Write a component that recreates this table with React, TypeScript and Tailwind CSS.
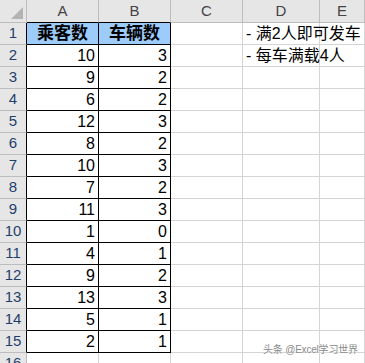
import React from 'react';

const rows: [number, number][] = [
  [10, 3], [9, 2], [6, 2], [12, 3], [8, 2], [10, 3], [7, 2],
  [11, 3], [1, 0], [4, 1], [9, 2], [13, 3], [5, 1], [2, 1],
];

const notes: Record<number, string> = {
  1: '- 满2人即可发车',
  2: '- 每车满载4人',
};

const font = { fontFamily: '"Liberation Sans", "Noto Sans CJK SC", sans-serif' };

const App: React.FC = () => {
  const grid = 'grid grid-cols-[27px_72px_72px_72px_77px_1fr]';
  const cell = 'h-[22px] border-r border-b border-[#d4d4d4] bg-white';

  return (
    <div className="relative w-[365px] h-[363px] overflow-hidden bg-white text-black" style={font}>
      {/* column headers */}
      <div className={grid}>
        <div className="relative h-[23px] bg-[#e6e6e6] border-r border-b border-[#bdbdbd]">
          <div className="absolute right-[3px] bottom-[3px] w-0 h-0 border-l-[12px] border-l-transparent border-b-[12px] border-b-[#b4b4b4]" />
        </div>
        {['A', 'B', 'C', 'D', 'E'].map((c, i) => (
          <div
            key={c}
            className={`h-[23px] bg-[#e6e6e6] border-r border-b flex items-center justify-center text-[15px] text-[#444] ${i < 2 ? 'border-r-[#bdbdbd] border-b-black' : 'border-[#bdbdbd]'}`}
          >
            {c}
          </div>
        ))}
      </div>

      {/* data rows */}
      {Array.from({ length: 16 }).map((_, r) => {
        const n = r + 1;
        const inData = n <= 15;
        const a = n === 1 ? '乘客数' : inData ? rows[n - 2][0] : '';
        const b = n === 1 ? '车辆数' : inData ? rows[n - 2][1] : '';
        const head = n === 1;
        return (
          <div key={n} className={grid}>
            <div
              className={`h-[22px] bg-[#e6e6e6] border-b border-b-[#bdbdbd] border-r flex items-center justify-center text-[15px] text-[#1f3f6b] ${inData ? 'border-r-black' : 'border-r-[#bdbdbd]'}`}
            >
              {n}
            </div>
            {[a, b].map((v, i) => (
              <div
                key={i}
                className={`h-[22px] border-r border-b flex items-center ${
                  inData ? 'border-black' : 'border-[#d4d4d4]'
                } ${head ? 'bg-[#9dcbfa] justify-center font-bold text-[17px]' : 'bg-white justify-end pr-[3px] text-[16px]'}`}
              >
                {v}
              </div>
            ))}
            <div className={cell} />
            <div className={`${cell} relative`}>
              {notes[n] && (
                <span className="absolute left-[3px] top-0 h-[21px] flex items-center whitespace-nowrap text-[16px]">
                  {notes[n]}
                </span>
              )}
            </div>
            <div className={cell} />
          </div>
        );
      })}

      {/* watermark */}
      <div className="absolute left-[263px] top-[342px] text-[10px] text-[#8a8a8a] tracking-[-0.2px] whitespace-nowrap [text-shadow:0_0_2px_white]">
        头条 @Excel学习世界
      </div>
    </div>
  );
};

export default App;
